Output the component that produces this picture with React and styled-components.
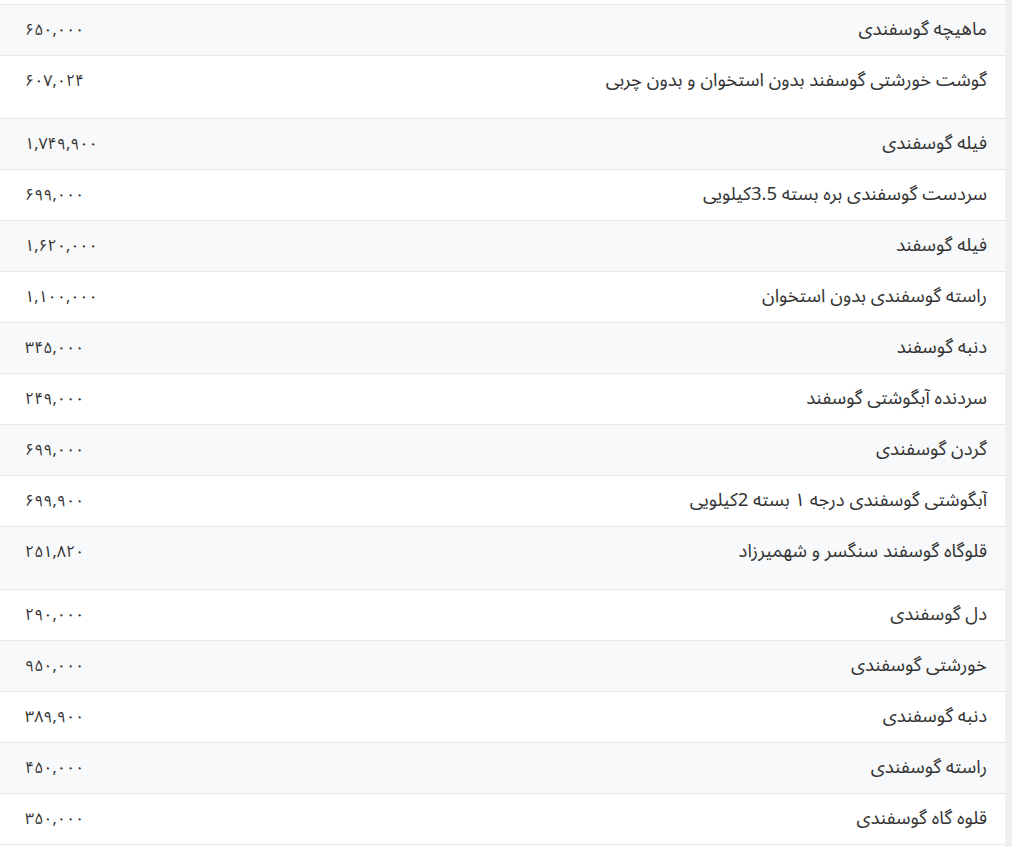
import React from 'react';
import styled, { createGlobalStyle } from 'styled-components';

const GlobalStyle = createGlobalStyle`
  html, body {
    margin: 0;
    padding: 0;
    background: #fff;
  }
  body {
    font-family: "Noto Sans Arabic", "DejaVu Sans", "Noto Sans", sans-serif;
    color: #333;
  }
`;

const products = [
  { name: 'ماهیچه گوسفندی', price: '۶۵۰,۰۰۰' },
  { name: 'گوشت خورشتی گوسفند بدون استخوان و بدون چربی', price: '۶۰۷,۰۲۴', tall: true },
  { name: 'فیله گوسفندی', price: '۱,۷۴۹,۹۰۰' },
  { name: 'سردست گوسفندی بره بسته 3.5کیلویی', price: '۶۹۹,۰۰۰' },
  { name: 'فیله گوسفند', price: '۱,۶۲۰,۰۰۰' },
  { name: 'راسته گوسفندی بدون استخوان', price: '۱,۱۰۰,۰۰۰' },
  { name: 'دنبه گوسفند', price: '۳۴۵,۰۰۰' },
  { name: 'سردنده آبگوشتی گوسفند', price: '۲۴۹,۰۰۰' },
  { name: 'گردن گوسفندی', price: '۶۹۹,۰۰۰' },
  { name: 'آبگوشتی گوسفندی درجه ۱ بسته 2کیلویی', price: '۶۹۹,۹۰۰' },
  { name: 'قلوگاه گوسفند سنگسر و شهمیرزاد', price: '۲۵۱,۸۲۰', tall: true },
  { name: 'دل گوسفندی', price: '۲۹۰,۰۰۰' },
  { name: 'خورشتی گوسفندی', price: '۹۵۰,۰۰۰' },
  { name: 'دنبه گوسفندی', price: '۳۸۹,۹۰۰' },
  { name: 'راسته گوسفندی', price: '۴۵۰,۰۰۰' },
  { name: 'قلوه گاه گوسفندی', price: '۳۵۰,۰۰۰' },
];

const App = () => {
  return (
    <>
      <GlobalStyle />
      <Page>
        <Content>
          <PriceTable>
            <tbody>
              {products.map((p, idx) => (
                <Row key={idx} $striped={idx % 2 === 0} $tall={p.tall}>
                  <NameCell>{p.name}</NameCell>
                  <PriceCell>{p.price}</PriceCell>
                </Row>
              ))}
            </tbody>
          </PriceTable>
        </Content>
        <Track />
      </Page>
    </>
  );
};

const Page = styled.div`
  display: flex;
  width: 1012px;
  height: 847px;
  overflow: hidden;
`;

const Content = styled.div`
  flex: 1;
  padding-top: 4px;
`;

const Track = styled.div`
  width: 7px;
  background: #eef0f2;
`;

const PriceTable = styled.table`
  width: 100%;
  direction: rtl;
  border-collapse: collapse;
  border-top: 1px solid #e6e8eb;
`;

const Row = styled.tr`
  height: ${p => (p.$tall ? '63px' : '51px')};
  background: ${p => (p.$striped ? '#f8f9fa' : '#fff')};
  border-bottom: 1px solid #e6e8eb;
`;

const NameCell = styled.td`
  vertical-align: top;
  text-align: right;
  padding: 11px 18px 0 12px;
  font-size: 18.5px;
  line-height: 28px;
  white-space: nowrap;
`;

const PriceCell = styled.td`
  vertical-align: top;
  text-align: left;
  padding: 12px 12px 0 25px;
  font-size: 16px;
  line-height: 26px;
  white-space: nowrap;
`;

export default App;
